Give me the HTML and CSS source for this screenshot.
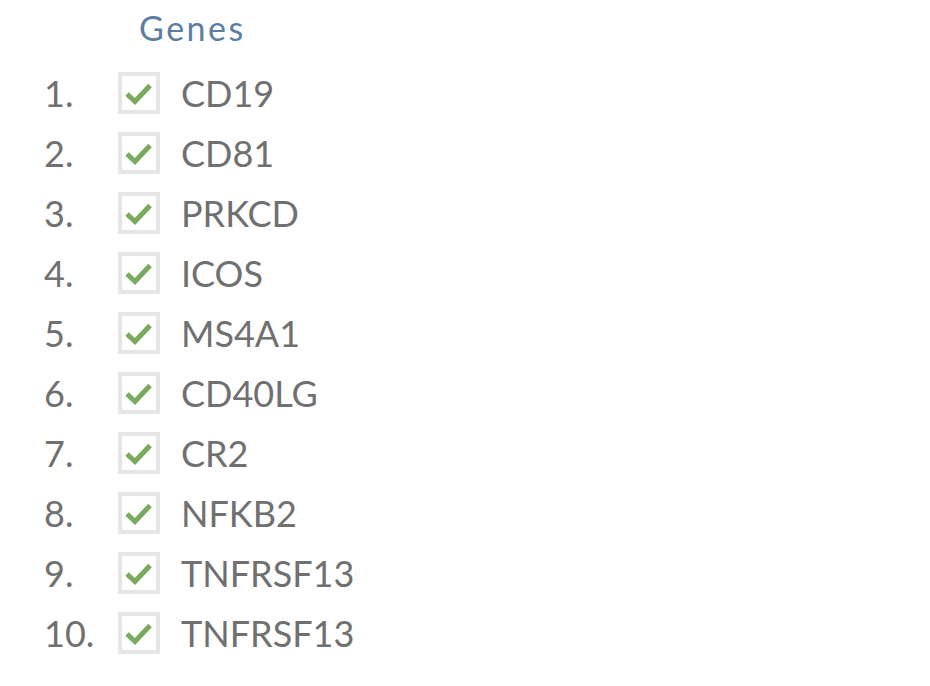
FILE: index.html
```html
<!DOCTYPE html>
<html>
<head>
<meta charset="utf-8">
<link rel="stylesheet" href="styles.css">
</head>
<body>
<div class="panel">
  <h2 class="title">Genes</h2>
  <ol class="genes">
    <li class="row"><span class="num">1.</span><span class="box"><svg viewBox="0 0 34 34"><polyline points="5,18 13,25.5 28,9.5"/></svg></span><span class="name">CD19</span></li>
    <li class="row"><span class="num">2.</span><span class="box"><svg viewBox="0 0 34 34"><polyline points="5,18 13,25.5 28,9.5"/></svg></span><span class="name">CD81</span></li>
    <li class="row"><span class="num">3.</span><span class="box"><svg viewBox="0 0 34 34"><polyline points="5,18 13,25.5 28,9.5"/></svg></span><span class="name">PRKCD</span></li>
    <li class="row"><span class="num">4.</span><span class="box"><svg viewBox="0 0 34 34"><polyline points="5,18 13,25.5 28,9.5"/></svg></span><span class="name">ICOS</span></li>
    <li class="row"><span class="num">5.</span><span class="box"><svg viewBox="0 0 34 34"><polyline points="5,18 13,25.5 28,9.5"/></svg></span><span class="name">MS4A1</span></li>
    <li class="row"><span class="num">6.</span><span class="box"><svg viewBox="0 0 34 34"><polyline points="5,18 13,25.5 28,9.5"/></svg></span><span class="name">CD40LG</span></li>
    <li class="row"><span class="num">7.</span><span class="box"><svg viewBox="0 0 34 34"><polyline points="5,18 13,25.5 28,9.5"/></svg></span><span class="name">CR2</span></li>
    <li class="row"><span class="num">8.</span><span class="box"><svg viewBox="0 0 34 34"><polyline points="5,18 13,25.5 28,9.5"/></svg></span><span class="name">NFKB2</span></li>
    <li class="row"><span class="num">9.</span><span class="box"><svg viewBox="0 0 34 34"><polyline points="5,18 13,25.5 28,9.5"/></svg></span><span class="name">TNFRSF13C</span></li>
    <li class="row"><span class="num">10.</span><span class="box"><svg viewBox="0 0 34 34"><polyline points="5,18 13,25.5 28,9.5"/></svg></span><span class="name">TNFRSF13B</span></li>
  </ol>
</div>
</body>
</html>
```
FILE: styles.css
```css
html, body {
  margin: 0;
  padding: 0;
  background: #ffffff;
}
body {
  font-family: Lato, "Open Sans", sans-serif;
  color: #707070;
}
.panel {
  padding: 6px 0 0 44px;
  width: 311px;
}
.title {
  margin: 0 0 0 95px;
  font-weight: 400;
  font-size: 34px;
  line-height: 44px;
  letter-spacing: 2.5px;
  color: #5b7fa1;
}
.genes {
  list-style: none;
  margin: 13px 0 0 0;
  padding: 0;
}
.row {
  display: flex;
  align-items: center;
  height: 60px;
}
.num {
  width: 74px;
  flex: none;
  font-size: 36px;
  line-height: 60px;
}
.box {
  flex: none;
  width: 34px;
  height: 34px;
  border: 4px solid #e6e6e6;
  display: flex;
  align-items: center;
  justify-content: center;
}
.box svg {
  width: 34px;
  height: 34px;
}
.box polyline {
  fill: none;
  stroke: #78ab5d;
  stroke-width: 5;
  stroke-linejoin: miter;
}
.name {
  margin-left: 21px;
  flex: none;
  width: 175px;
  overflow: hidden;
  white-space: nowrap;
  font-size: 36px;
  line-height: 60px;
}
```
